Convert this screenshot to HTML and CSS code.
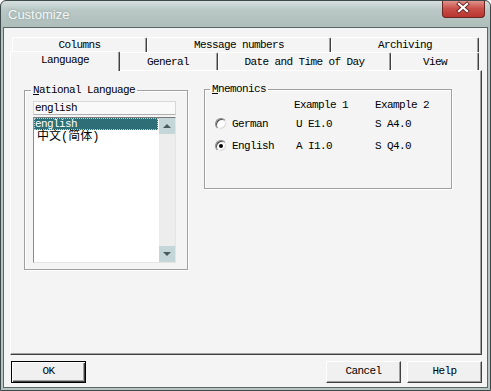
FILE: index.html
```html
<!DOCTYPE html>
<html>
<head>
	<title>Customize</title>
	<meta charset="utf-8">
	<link rel="stylesheet" href="styles.css">
</head>
<body>
	<div class="window">
		<div class="titlebar">
			<span class="title">Customize</span>
			<div class="close">
				<svg width="43" height="18" viewBox="0 0 43 18">
					<path d="M17 5 L25 12 M25 5 L17 12" stroke="#6a2420" stroke-width="4" stroke-linecap="square"/>
					<path d="M17 5 L25 12 M25 5 L17 12" stroke="#fff" stroke-width="2.2" stroke-linecap="square"/>
				</svg>
			</div>
		</div>

		<div class="client">
			<div class="tabrow back">
				<div class="tab w-columns">Columns</div>
				<div class="tab w-numbers">Message numbers</div>
				<div class="tab w-archiving">Archiving</div>
			</div>
			<div class="tabrow front">
				<div class="tab w-language active">Language</div>
				<div class="tab w-general">General</div>
				<div class="tab w-date">Date and Time of Day</div>
				<div class="tab w-view">View</div>
			</div>

			<div class="panel">
				<fieldset class="group lang">
					<legend><u>N</u>ational Language</legend>
					<div class="field">english</div>
					<div class="listbox">
						<div class="items">
							<div class="item selected">english</div>
							<div class="item cjk">中文(简体)</div>
						</div>
						<div class="scrollbar">
							<div class="sbtn"><span class="arrow up"></span></div>
							<div class="track"></div>
							<div class="sbtn"><span class="arrow down"></span></div>
						</div>
					</div>
				</fieldset>

				<fieldset class="group mnem">
					<legend><u>M</u>nemonics</legend>
					<div class="row head">
						<span class="c1"></span>
						<span class="c2">Example 1</span>
						<span class="c3">Example 2</span>
					</div>
					<div class="row r1">
						<span class="c1"><i class="radio"></i>German</span>
						<span class="c2 val">U E1.0</span>
						<span class="c3">S A4.0</span>
					</div>
					<div class="row r2">
						<span class="c1"><i class="radio on"></i>English</span>
						<span class="c2 val">A I1.0</span>
						<span class="c3">S Q4.0</span>
					</div>
				</fieldset>
			</div>

			<div class="buttons">
				<div class="btn default">OK</div>
				<div class="btn">Cancel</div>
				<div class="btn">Help</div>
			</div>
		</div>
	</div>
</body>
</html>
```

FILE: styles.css
```css
	body{
		margin: 0;
		background: #fff;
		font-family: "Liberation Mono", "Noto Sans CJK SC", monospace;
		font-size: 11px;
		letter-spacing: -0.6px;
		color: #000;
	}
	.window{
		box-sizing: border-box;
		width: 491px;
		height: 391px;
		border: 1px solid #3d4848;
		border-radius: 6px 6px 0 0;
		background: linear-gradient(#d6e0de 0px, #b9c8c5 9px, #aebebb 26px, #b7c5c2 40px);
		overflow: hidden;
	}
	.titlebar{
		height: 26px;
		display: flex;
		justify-content: space-between;
		align-items: flex-start;
		padding: 0 5px 0 7px;
	}
	.title{
		font-family: "Liberation Sans", sans-serif;
		font-size: 13px;
		letter-spacing: 0;
		line-height: 27px;
		color: #f2f6f6;
		text-shadow: 0 0 3px #8a9c9a;
	}
	.close{
		box-sizing: border-box;
		width: 43px;
		height: 18px;
		margin-top: -1px;
		border: 1px solid #6b2522;
		border-top: none;
		border-radius: 0 0 4px 4px;
		background: linear-gradient(#e49a94, #c9504a 50%, #b8352e);
		overflow: hidden;
	}
	.close svg{
		display: block;
		margin: -1px 0 0 -1px;
	}

	.client{
		box-sizing: border-box;
		height: 361px;
		margin: 0 2px;
		border: 1px solid #5a6666;
		background: #f4f4f4;
		padding: 9px 0 0 6px;
	}

	/* tabs */
	.tabrow{
		display: flex;
		margin-left: 2px;
		width: 467px;
	}
	.back{ height: 15px; }
	.front{
		height: 18px;
		align-items: flex-start;
	}
	.tab{
		box-sizing: border-box;
		border-top: 1px solid #fff;
		border-left: 1px solid #fff;
		border-right: 1px solid #404040;
		box-shadow: inset -1px 0 0 #a0a0a0;
		border-radius: 2px 2px 0 0;
		text-align: center;
		background: #f4f4f4;
	}
	.back .tab{ height: 15px; line-height: 15px; }
	.front .tab{ height: 18px; line-height: 18px; }
	.w-columns{ width: 135px; }
	.w-numbers{ width: 184px; }
	.w-archiving{ width: 148px; }
	.w-language{ width: 106px; }
	.w-general{ width: 100px; }
	.w-date{ width: 173px; }
	.w-view{ width: 88px; }
	.front .active{
		position: relative;
		z-index: 1;
		width: 110px;
		height: 20px;
		margin: -1px -2px 0 -2px;
		line-height: 17px;
	}

	.panel{
		box-sizing: border-box;
		width: 472px;
		height: 285px;
		border-top: 1px solid #fff;
		border-left: 1px solid #fff;
		border-right: 1px solid #404040;
		border-bottom: 1px solid #404040;
		box-shadow: inset -1px -1px 0 #a0a0a0;
		display: flex;
		align-items: flex-start;
		gap: 16px;
		padding: 12px 0 0 13px;
	}

	/* group boxes */
	.group{
		box-sizing: border-box;
		margin: 0;
		min-width: 0;
		border: 1px solid #a0a0a0;
		box-shadow: inset 1px 1px 0 #fff, 1px 1px 0 #fff;
	}
	.group legend{
		padding: 0 2px;
		line-height: 12px;
	}
	.lang{
		width: 164px;
		margin-top: 1px;
		padding: 5px 10px 6px 8px;
	}
	.lang legend{ margin-left: -2px; }
	.mnem{
		width: 248px;
		padding: 4px 0 36px 10px;
	}
	.mnem legend{ margin-left: -5px; }

	.field{
		box-sizing: border-box;
		width: 143px;
		height: 14px;
		border: 1px solid #d8d8d8;
		border-bottom-color: #b0b0b0;
		background: #f9f9f9;
		line-height: 12px;
		padding-left: 1px;
	}
	.listbox{
		box-sizing: border-box;
		width: 143px;
		height: 146px;
		margin-top: 2px;
		display: flex;
		border: 1px solid;
		border-color: #7a7a7a #e4e4e4 #e4e4e4 #8c8c8c;
		box-shadow: inset 0 1px 0 #a4a4a4;
		background: #fff;
	}
	.items{
		flex: 1;
		padding-right: 1px;
	}
	.item{
		height: 12px;
		line-height: 12px;
		padding-left: 2px;
		white-space: nowrap;
	}
	.selected{
		box-sizing: border-box;
		background: #2e6f77;
		color: #fff;
		outline: 1px dotted #b8d0d2;
		outline-offset: -1px;
		padding-left: 1px;
	}
	.cjk{
		height: 14px;
		line-height: 15px;
		font-size: 12px;
		letter-spacing: 0;
		padding-left: 3px;
	}
	.scrollbar{
		width: 16px;
		display: flex;
		flex-direction: column;
		background: #ededed;
	}
	.track{ flex: 1; }
	.sbtn{
		height: 16px;
		background: #c5d6d9;
		display: flex;
		align-items: center;
		justify-content: center;
	}
	.arrow{
		width: 0;
		height: 0;
		border-left: 4px solid transparent;
		border-right: 4px solid transparent;
	}
	.up{ border-bottom: 4px solid #4a5a5e; }
	.down{ border-top: 4px solid #4a5a5e; }

	/* mnemonics grid */
	.row{
		display: flex;
		height: 12px;
		line-height: 12px;
		white-space: nowrap;
	}
	.r1{ margin-top: 7px; }
	.r2{ margin-top: 10px; }
	.c1{
		width: 79px;
		display: flex;
		align-items: center;
	}
	.c2{ width: 81px; }
	.val{ padding-left: 2px; width: 79px; }
	.radio{
		box-sizing: border-box;
		position: relative;
		width: 12px;
		height: 12px;
		margin-right: 5px;
		border-radius: 50%;
		border: 1px solid;
		border-color: #8a8a8a #f0f0f0 #f0f0f0 #8a8a8a;
		box-shadow: inset 1px 1px 0 #505050, inset -1px -1px 0 #d8d8d8;
		background: #fff;
	}
	.on::after{
		content: "";
		position: absolute;
		left: 3px;
		top: 3px;
		width: 4px;
		height: 4px;
		border-radius: 50%;
		background: #000;
	}

	/* buttons */
	.buttons{
		display: flex;
		gap: 6px;
		margin: 6px 0 0 1px;
		width: 471px;
	}
	.btn{
		box-sizing: border-box;
		width: 75px;
		height: 22px;
		line-height: 19px;
		text-align: center;
		background: #f0f0f0;
		border: 1px solid;
		border-color: #fff #404040 #404040 #fff;
		box-shadow: inset -1px -1px 0 #a0a0a0;
	}
	.default{
		margin-right: auto;
		border: 1px solid #000;
		box-shadow: inset 1px 1px 0 #fff, inset -1px -1px 0 #404040, inset -2px -2px 0 #a0a0a0;
	}
```
